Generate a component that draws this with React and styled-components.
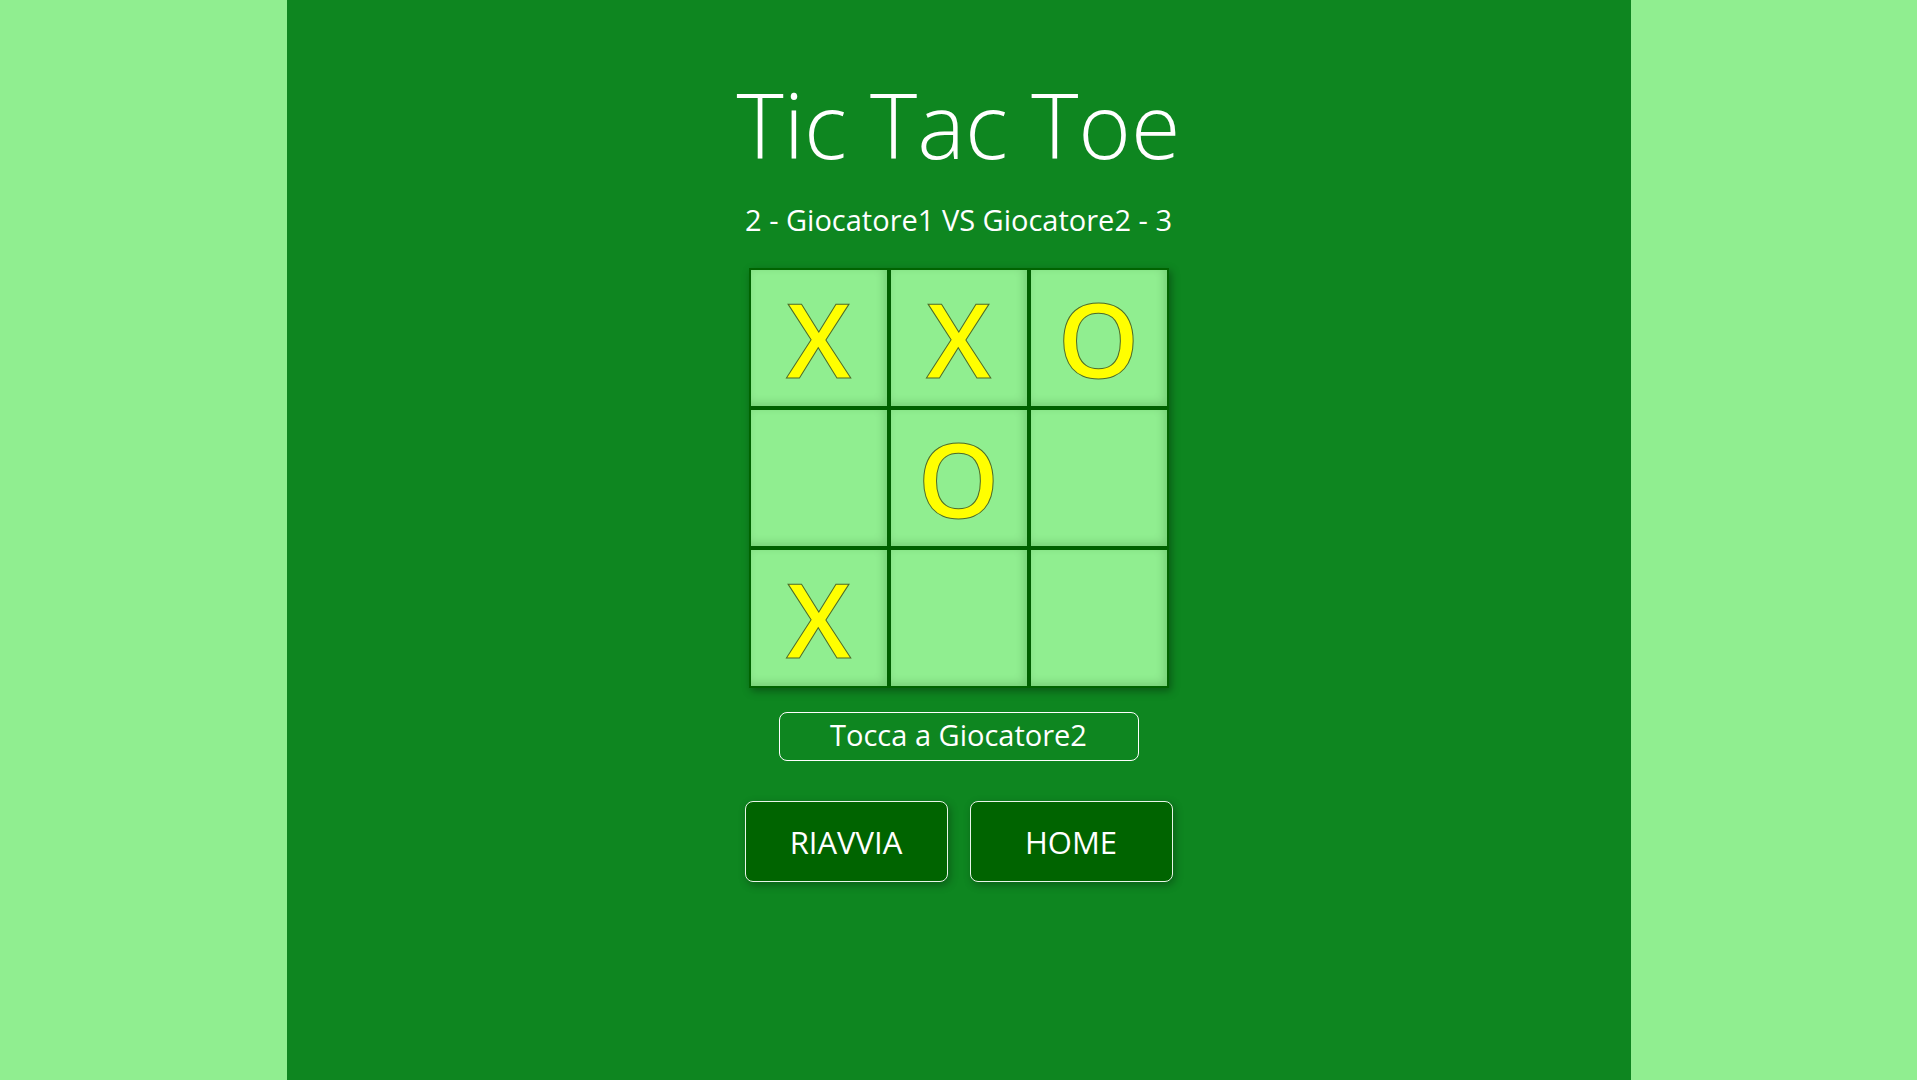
import React from "react"
import styled, { createGlobalStyle } from "styled-components"

const GlobalStyle = createGlobalStyle`
  html, body {
    margin: 0;
    padding: 0;
    background: #90ee90;
    font-family: "Open Sans", "Liberation Sans", sans-serif;
  }
`

const Page = styled.div`
  min-height: 100vh;
  background: #90ee90;
`

const Main = styled.main`
  width: 1344px;
  min-height: 100vh;
  margin: 0 auto;
  background: #0e8620;
  color: #ffffff;
  display: flex;
  flex-direction: column;
  align-items: center;
`

const Title = styled.h1`
  margin: 79px 0 0 0;
  font-size: 90px;
  font-weight: 300;
  line-height: 1;
  letter-spacing: 0;
`

const Score = styled.p`
  margin: 35px 0 0 0;
  font-size: 29px;
  font-weight: 400;
  line-height: 32px;
`

const Board = styled.div`
  margin-top: 32px;
  display: grid;
  grid-template-columns: repeat(3, 136px);
  grid-template-rows: repeat(3, 136px);
  gap: 4px;
  background: #005f00;
  border: 2px solid #006400;
  box-shadow: 2px 3px 8px rgba(0, 0, 0, 0.35);
`

const Cell = styled.button`
  border: none;
  padding: 0;
  margin: 0;
  background: #90ee90;
  box-shadow: inset -3px -3px 8px rgba(0, 60, 0, 0.18);
  display: flex;
  align-items: center;
  justify-content: center;
  font-family: "Open Sans", "Liberation Sans", sans-serif;
  font-size: 104px;
  font-weight: 600;
  line-height: 1;
  color: #ffff00;
  -webkit-text-stroke: 1px #4d6b2a;
  cursor: ${({ $filled }) => ($filled ? "default" : "pointer")};
`

const Status = styled.div`
  margin-top: 24px;
  width: 358px;
  box-sizing: content-box;
  padding: 7px 0 10px 0;
  border: 1px solid #ffffff;
  border-radius: 8px;
  text-align: center;
  font-size: 29px;
  line-height: 30px;
`

const ButtonRow = styled.div`
  margin-top: 40px;
  display: flex;
  gap: 22px;
`

const ActionButton = styled.button`
  width: 203px;
  height: 81px;
  background: #006400;
  color: #ffffff;
  border: 1px solid #e8f5e8;
  border-radius: 8px;
  box-shadow: 2px 3px 8px rgba(0, 0, 0, 0.3);
  font-family: "Open Sans", "Liberation Sans", sans-serif;
  font-size: 31px;
  font-weight: 400;
  cursor: pointer;
`

const board = ["X", "X", "O", "", "O", "", "X", "", ""]

export default function App() {
  return (
    <Page>
      <GlobalStyle />
      <Main>
        <Title>Tic Tac Toe</Title>
        <Score>2 - Giocatore1 VS Giocatore2 - 3</Score>
        <Board>
          {board.map((value, i) => (
            <Cell key={i} $filled={!!value}>{value}</Cell>
          ))}
        </Board>
        <Status>Tocca a Giocatore2</Status>
        <ButtonRow>
          <ActionButton>RIAVVIA</ActionButton>
          <ActionButton>HOME</ActionButton>
        </ButtonRow>
      </Main>
    </Page>
  )
}
